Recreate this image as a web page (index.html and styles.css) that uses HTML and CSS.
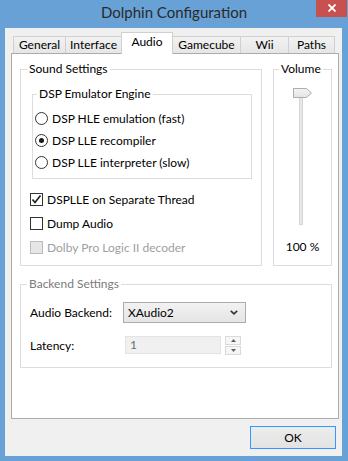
FILE: index.html
```html
<!DOCTYPE html>
<html lang="en">
<head>
    <meta charset="UTF-8">
    <title>Dolphin Configuration</title>
    <link rel="stylesheet" href="styles.css">
</head>
<body>
    <div class="window">
        <div class="titlebar">
            <span></span>
            <div class="title">Dolphin Configuration</div>
            <button class="close" title="Close">
                <svg width="8" height="8" viewBox="0 0 8 8">
                    <path d="M0.5 0.5 L7.5 7.5 M7.5 0.5 L0.5 7.5" stroke="#fff" stroke-width="1.8"/>
                </svg>
            </button>
        </div>

        <div class="client">
            <!-- tab strip -->
            <div class="tabs">
                <div class="tab tab-general">General</div>
                <div class="tab tab-interface">Interface</div>
                <div class="tab tab-audio active">Audio</div>
                <div class="tab tab-gamecube">Gamecube</div>
                <div class="tab tab-wii">Wii</div>
                <div class="tab tab-paths">Paths</div>
            </div>

            <div class="panel">
                <div class="top-row">
                    <fieldset class="group sound">
                        <legend>Sound Settings</legend>

                        <fieldset class="group dsp">
                            <legend>DSP Emulator Engine</legend>
                            <div class="options radios">
                                <label class="option"><span class="radio"></span>DSP HLE emulation (fast)</label>
                                <label class="option"><span class="radio checked"></span>DSP LLE recompiler</label>
                                <label class="option"><span class="radio"></span>DSP LLE interpreter (slow)</label>
                            </div>
                        </fieldset>

                        <div class="options checks">
                            <label class="option">
                                <span class="check">
                                    <svg width="11" height="11" viewBox="0 0 11 11">
                                        <path d="M1.5 5.5 L4 8.5 L9.5 1.5" fill="none" stroke="#1a1a1a" stroke-width="1.6"/>
                                    </svg>
                                </span>DSPLLE on Separate Thread
                            </label>
                            <label class="option"><span class="check"></span>Dump Audio</label>
                            <label class="option disabled"><span class="check"></span>Dolby Pro Logic II decoder</label>
                        </div>
                    </fieldset>

                    <fieldset class="group volume">
                        <legend>Volume</legend>
                        <div class="volume-body">
                            <svg class="slider" width="20" height="140" viewBox="0 0 20 140">
                                <rect x="6.5" y="8.5" width="3" height="129" fill="#e7e7e7" stroke="#d6d6d6"/>
                                <defs>
                                    <linearGradient id="thumb" x1="0" y1="0" x2="0" y2="1">
                                        <stop offset="0" stop-color="#f4f4f4"/>
                                        <stop offset="1" stop-color="#e4e4e4"/>
                                    </linearGradient>
                                </defs>
                                <path d="M0.5 1.5 H13.5 L18.5 6 L13.5 10.5 H0.5 Z" fill="url(#thumb)" stroke="#adadad"/>
                            </svg>
                            <div class="volume-value">100 %</div>
                        </div>
                    </fieldset>
                </div>

                <fieldset class="group backend">
                    <legend>Backend Settings</legend>
                    <div class="backend-grid">
                        <div>Audio Backend:</div>
                        <div class="select">
                            <span>XAudio2</span>
                            <svg width="8" height="5" viewBox="0 0 8 5">
                                <path d="M0.8 0.8 L4 3.8 L7.2 0.8" fill="none" stroke="#333" stroke-width="1.6"/>
                            </svg>
                        </div>

                        <div>Latency:</div>
                        <div class="latency">
                            <div class="number">1</div>
                            <div class="spin">
                                <div class="spin-btn">
                                    <svg width="5" height="3" viewBox="0 0 5 3"><path d="M0 3 L2.5 0 L5 3 Z" fill="#606060"/></svg>
                                </div>
                                <div class="spin-btn">
                                    <svg width="5" height="3" viewBox="0 0 5 3"><path d="M0 0 L2.5 3 L5 0 Z" fill="#606060"/></svg>
                                </div>
                            </div>
                        </div>
                    </div>
                </fieldset>
            </div>

            <div class="footer">
                <button class="ok">OK</button>
            </div>
        </div>
    </div>
</body>
</html>
```

FILE: styles.css
```css
body {
    margin: 0;
    background: #67a1d6;
    font-family: Lato, "Noto Sans", sans-serif;
    font-size: 12px;
    color: #000;
}

.window {
    width: 348px;
    height: 461px;
    display: flex;
    flex-direction: column;
}

/* title bar */
.titlebar {
    height: 28px;
    display: grid;
    grid-template-columns: 1fr auto 1fr;
}

.title {
    font-size: 15px;
    line-height: 24px;
    color: #2a2a2a;
}

.close {
    justify-self: end;
    width: 31px;
    height: 17px;
    margin-right: 1px;
    padding: 0 0 1px 0;
    border: none;
    background: #c75050;
    display: flex;
    align-items: center;
    justify-content: center;
}

/* client area */
.client {
    margin: 0 6px 0 5px;
    height: 428px;
    box-sizing: border-box;
    background: #f0f0f0;
    padding: 4px 3px 7px 6px;
    display: flex;
    flex-direction: column;
}

.tabs {
    height: 21px;
    display: flex;
    align-items: flex-end;
    padding-left: 2px;
}

.tab {
    box-sizing: border-box;
    height: 17px;
    margin-right: -1px;
    border: 1px solid #d0d0d0;
    border-bottom: none;
    background: linear-gradient(#f2f2f2, #e6e6e6);
    display: flex;
    align-items: center;
    justify-content: center;
    padding-bottom: 1px;
    line-height: 16px;
}

.tab.active {
    height: 22px;
    margin-bottom: -1px;
    padding-bottom: 4px;
    background: #fff;
    position: relative;
    z-index: 1;
}

.tab-general { width: 53px; }
.tab-interface { width: 57px; }
.tab-audio { width: 52px; }
.tab-gamecube { width: 69px; }
.tab-wii { width: 49px; }
.tab-paths { width: 47px; }

.panel {
    height: 366px;
    box-sizing: border-box;
    border: 1px solid #acacac;
    background: #fff;
    padding: 7px 6px 0 8px;
}

.top-row {
    display: flex;
    gap: 11px;
}

/* group boxes */
.group {
    margin: 0;
    padding: 0;
    border: 1px solid #dcdcdc;
    min-width: 0;
}

.group legend {
    padding: 0 2px;
    margin-left: 6px;
    line-height: 16px;
}

.sound {
    width: 242px;
    box-sizing: border-box;
    padding: 0 0 10px 9px;
}

.sound > legend {
    margin-left: -3px;
}

.dsp {
    width: 220px;
    box-sizing: border-box;
    margin: 9px 0 0 2px;
    padding: 8px 0 8px 2px;
}

.dsp legend {
    margin-left: 2px;
}

.options {
    display: flex;
    flex-direction: column;
}

.radios {
    gap: 6px;
}

.checks {
    gap: 8px;
    margin-top: 12px;
}

.option {
    height: 16px;
    display: flex;
    align-items: center;
    white-space: nowrap;
}

.radio {
    box-sizing: border-box;
    width: 13px;
    height: 13px;
    margin-right: 4px;
    border: 1px solid #333;
    border-radius: 50%;
    background: #fff;
    display: flex;
    align-items: center;
    justify-content: center;
}

.radio.checked::after {
    content: "";
    width: 5px;
    height: 5px;
    border-radius: 50%;
    background: #1a1a1a;
}

.check {
    box-sizing: border-box;
    width: 13px;
    height: 13px;
    margin-right: 4px;
    border: 1px solid #333;
    background: #fff;
    display: flex;
    align-items: center;
    justify-content: center;
}

.option.disabled {
    color: #a0a0a0;
}

.option.disabled .check {
    border-color: #bcbcbc;
    background: #e6e6e6;
}

.volume {
    flex: 1;
}

.volume legend {
    margin-left: 5px;
}

.volume-body {
    display: flex;
    flex-direction: column;
    align-items: center;
}

.slider {
    display: block;
    margin-top: 10px;
}

.volume-value {
    margin-top: 12px;
    line-height: 16px;
}

/* backend */
.backend {
    margin-top: 10px;
    padding: 10px 0 12px 9px;
}

.backend legend {
    margin-left: -3px;
    color: #7c7c7c;
}

.backend-grid {
    display: grid;
    grid-template-columns: 93px auto;
    row-gap: 13px;
    align-items: center;
}

.select {
    box-sizing: border-box;
    width: 123px;
    height: 21px;
    border: 1px solid #acacac;
    background: linear-gradient(#f2f2f2, #e5e5e5);
    padding: 0 7px 0 4px;
    display: flex;
    align-items: center;
    justify-content: space-between;
}

.latency {
    margin-left: 2px;
    display: flex;
    align-items: flex-start;
    gap: 4px;
}

.number {
    box-sizing: border-box;
    width: 96px;
    height: 18px;
    border: 1px solid #e3e3e3;
    background: #f0f0f0;
    color: #6d6d6d;
    padding-left: 4px;
    line-height: 16px;
}

.spin {
    width: 16px;
    height: 19px;
    display: flex;
    flex-direction: column;
    gap: 1px;
}

.spin-btn {
    flex: 1;
    box-sizing: border-box;
    border: 1px solid #dadada;
    background: #f6f6f6;
    display: flex;
    align-items: center;
    justify-content: center;
}

/* footer */
.footer {
    margin-top: 7px;
    display: flex;
    justify-content: flex-end;
}

.ok {
    width: 86px;
    height: 23px;
    margin-right: 3px;
    border: 1px solid #3399ff;
    background: linear-gradient(#ececec, #e3e3e3);
    font-family: inherit;
    font-size: 12px;
    color: #000;
    padding: 0;
}
```
